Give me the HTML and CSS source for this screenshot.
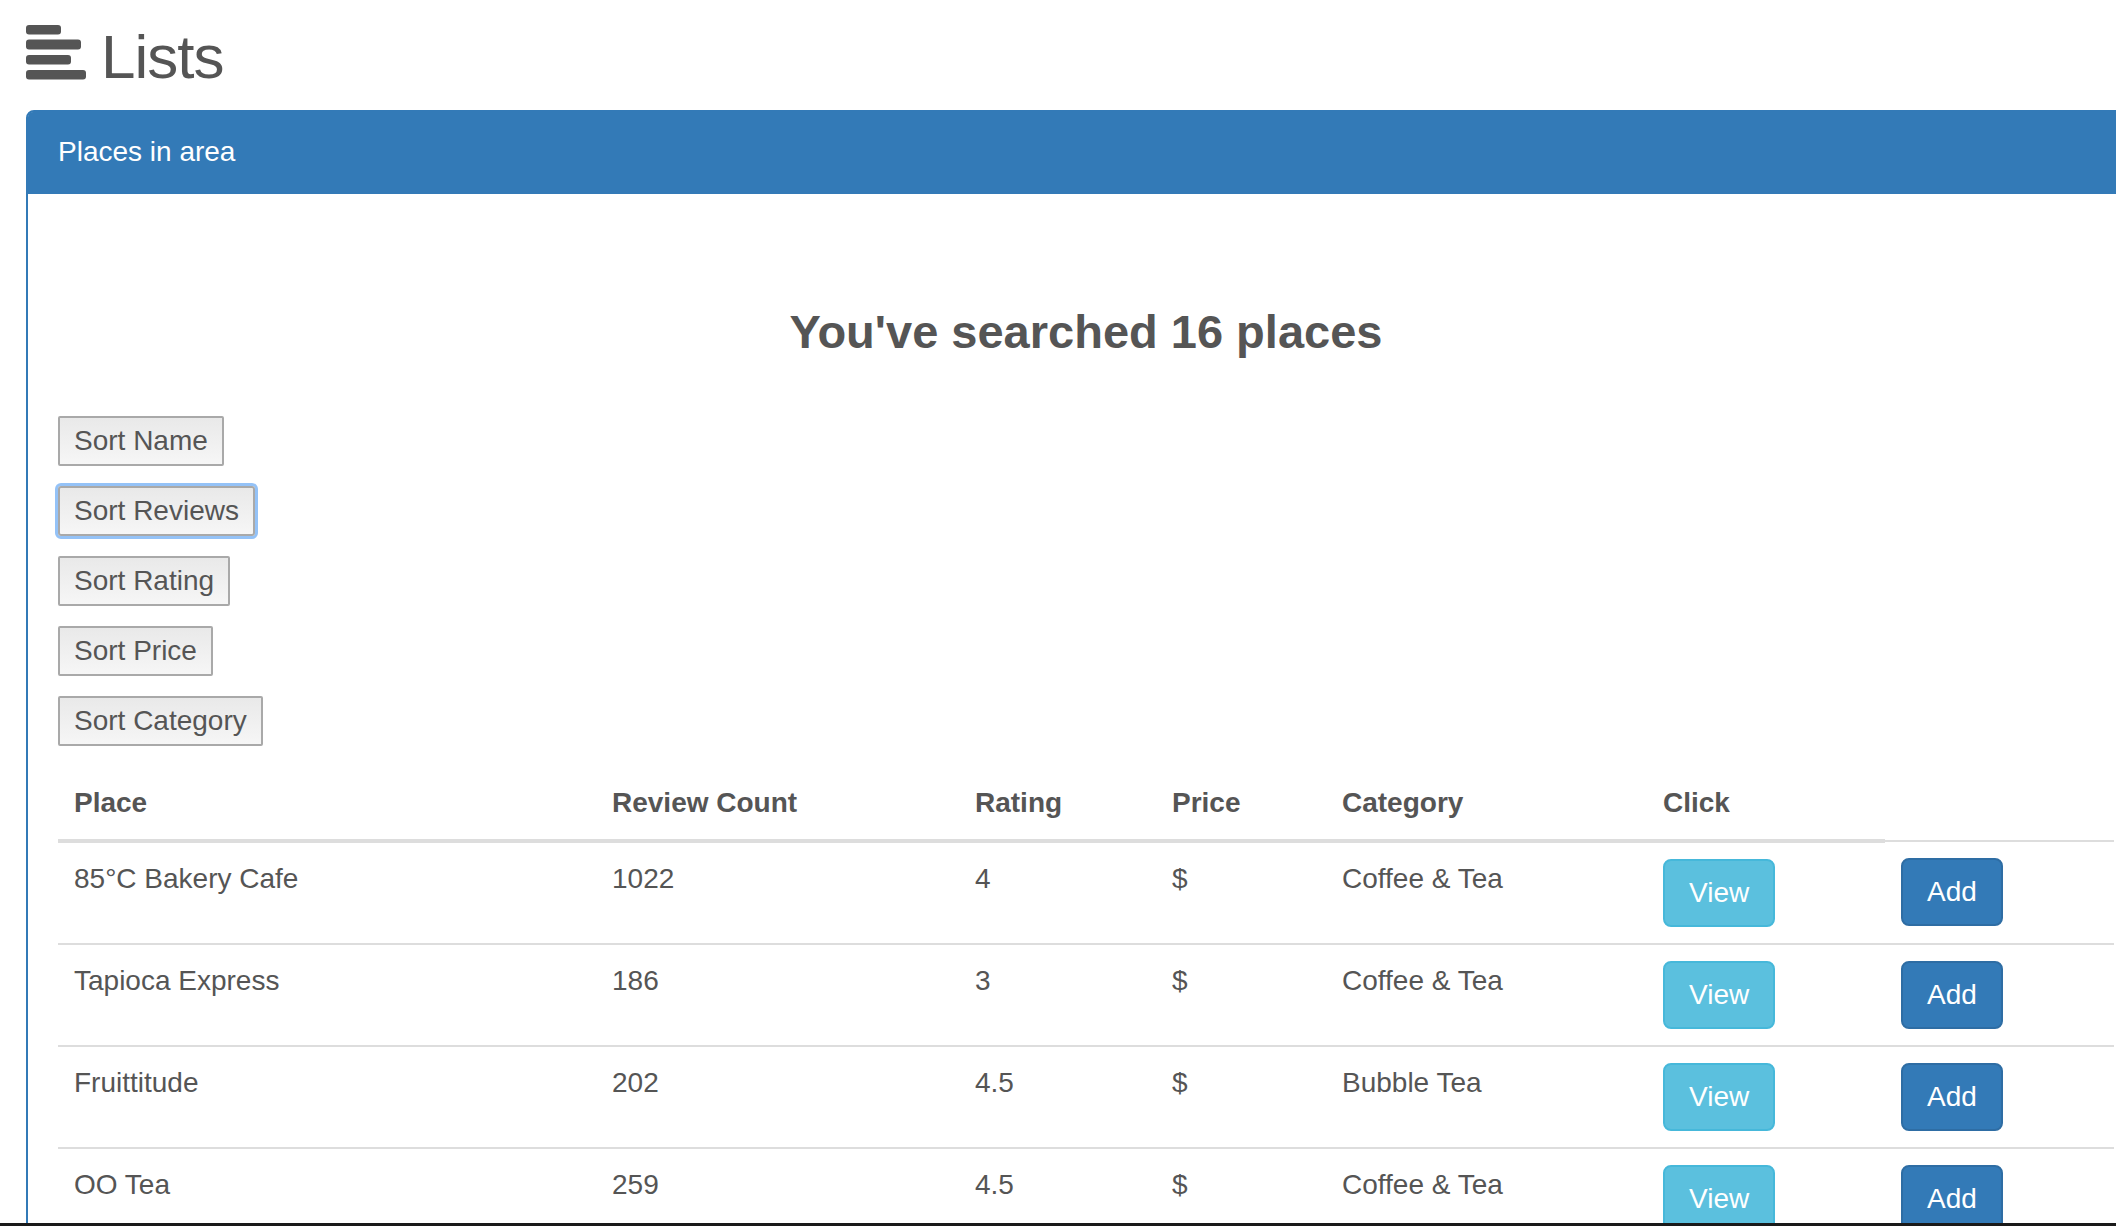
FILE: index.html
```html
<!DOCTYPE html>
<html>
<head>
<meta charset="utf-8">
<title>Lists</title>
<link rel="stylesheet" href="styles.css">
</head>
<body>
<div class="page">
  <div class="title">
    <svg class="title-icon" width="60" height="55" viewBox="0 0 60 55">
      <rect x="0" y="0" width="35" height="9.5" rx="3" fill="#555"/>
      <rect x="0" y="14.5" width="55" height="10" rx="3" fill="#555"/>
      <rect x="0" y="30" width="45" height="9.5" rx="3" fill="#555"/>
      <rect x="0" y="45" width="60" height="9.5" rx="3" fill="#555"/>
    </svg>
    <h1 class="title-text">Lists</h1>
  </div>

  <div class="panel">
    <div class="panel-heading">Places in area</div>
    <div class="panel-body">
      <h3 class="headline">You've searched 16 places</h3>
      <div class="sorts">
        <button class="sort-btn">Sort Name</button>
        <button class="sort-btn focused">Sort Reviews</button>
        <button class="sort-btn">Sort Rating</button>
        <button class="sort-btn">Sort Price</button>
        <button class="sort-btn">Sort Category</button>
      </div>
      <table class="places">
        <colgroup>
          <col class="c-place"><col class="c-reviews"><col class="c-rating"><col class="c-price"><col class="c-cat"><col class="c-view"><col>
        </colgroup>
        <thead>
          <tr><th>Place</th><th>Review Count</th><th>Rating</th><th>Price</th><th>Category</th><th>Click</th></tr>
        </thead>
        <tbody>
          <tr><td>85°C Bakery Cafe</td><td>1022</td><td>4</td><td>$</td><td>Coffee &amp; Tea</td><td><button class="btn btn-info">View</button></td><td><button class="btn btn-primary">Add</button></td></tr>
          <tr><td>Tapioca Express</td><td>186</td><td>3</td><td>$</td><td>Coffee &amp; Tea</td><td><button class="btn btn-info">View</button></td><td><button class="btn btn-primary">Add</button></td></tr>
          <tr><td>Fruittitude</td><td>202</td><td>4.5</td><td>$</td><td>Bubble Tea</td><td><button class="btn btn-info">View</button></td><td><button class="btn btn-primary">Add</button></td></tr>
          <tr><td>OO Tea</td><td>259</td><td>4.5</td><td>$</td><td>Coffee &amp; Tea</td><td><button class="btn btn-info">View</button></td><td><button class="btn btn-primary">Add</button></td></tr>
        </tbody>
      </table>
    </div>
  </div>
</div>
<div class="screen-edge"></div>
</body>
</html>
```

FILE: styles.css
```css
html {
  overflow: hidden;
}
body {
  margin: 0;
  font-family: "Liberation Sans", Arial, Helvetica, sans-serif;
  color: #555;
  background: #fff;
}
.page {
  padding-left: 26px;
  width: 2120px;
}
.title {
  display: flex;
  align-items: flex-start;
  gap: 15px;
  height: 110px;
  padding-top: 25px;
  box-sizing: border-box;
}
.title-icon {
  display: block;
  flex: none;
}
.title-text {
  margin: 1px 0 0 0;
  font-size: 62px;
  line-height: 62px;
  font-weight: 400;
  letter-spacing: -1px;
  color: #555;
}
.panel {
  border: 2px solid #337ab7;
  border-radius: 8px 8px 0 0;
  width: 2120px;
  box-sizing: border-box;
}
.panel-heading {
  background: #337ab7;
  color: #fff;
  font-size: 28px;
  line-height: 40px;
  padding: 20px 30px 22px;
  border-radius: 5px 5px 0 0;
}
.panel-body {
  padding: 30px;
}
.headline {
  margin: 82px 0 58px;
  text-align: center;
  font-size: 47px;
  line-height: 52px;
  font-weight: 700;
  color: #555;
}
.sorts {
  display: flex;
  flex-direction: column;
  align-items: flex-start;
  gap: 20px;
}
.sort-btn {
  font-family: "Liberation Sans", Arial, Helvetica, sans-serif;
  font-size: 28px;
  line-height: 40px;
  color: #555;
  padding: 3px 14px;
  border: 2px solid #a9a9a9;
  border-radius: 2px;
  background: linear-gradient(#e9e9e9, #f6f6f6);
  margin: 0;
}
.sort-btn.focused {
  box-shadow: 0 0 0 3px #94c2f7;
  border-radius: 3px;
}
.places {
  width: 100%;
  margin-top: 21px;
  border-collapse: collapse;
  font-size: 28px;
  line-height: 40px;
}
.c-place { width: 538px; }
.c-reviews { width: 363px; }
.c-rating { width: 197px; }
.c-price { width: 170px; }
.c-cat { width: 321px; }
.c-view { width: 238px; }
.places th {
  text-align: left;
  font-weight: 700;
  padding: 16px;
  border-bottom: 4px solid #ddd;
  vertical-align: bottom;
}
.places td {
  padding: 16px;
  border-top: 2px solid #ddd;
  vertical-align: top;
}
.btn {
  font-family: "Liberation Sans", Arial, Helvetica, sans-serif;
  font-size: 28px;
  line-height: 40px;
  padding: 12px 24px;
  border: 2px solid transparent;
  border-radius: 8px;
  color: #fff;
  margin: 0;
  display: inline-block;
}
.btn-info {
  background: #5bc0de;
  border-color: #46b8da;
}
.btn-primary {
  background: #337ab7;
  border-color: #2e6da4;
}
.screen-edge {
  position: fixed;
  left: 0;
  right: 0;
  bottom: 0;
  height: 3px;
  background: #1a1a1a;
}
```
